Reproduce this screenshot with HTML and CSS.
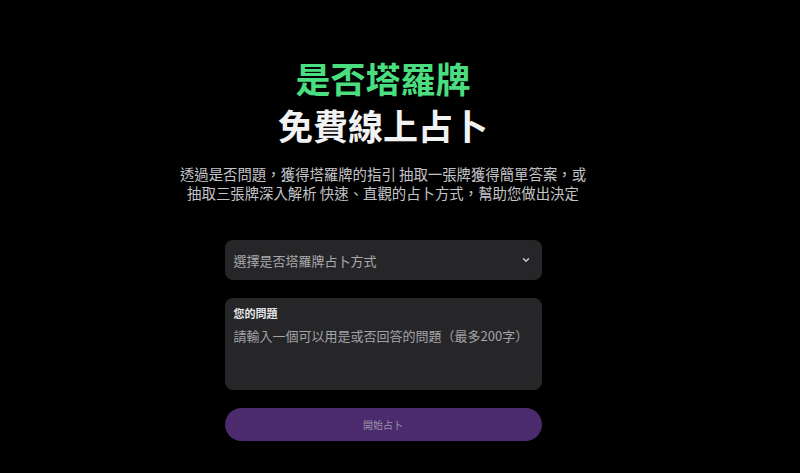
FILE: index.html
```html
<!DOCTYPE html>
<html lang="zh-Hant">
<head>
    <meta charset="UTF-8">
    <meta name="viewport" content="width=device-width, initial-scale=1.0">
    <title>是否塔羅牌 免費線上占卜</title>
    <link rel="stylesheet" href="styles.css">
</head>
<body>
    <main class="container">
        <h1 class="title">
            <span class="title-accent">是否塔羅牌</span>
            <span class="title-main">免費線上占卜</span>
        </h1>
        <p class="intro">透過是否問題，獲得塔羅牌的指引 抽取一張牌獲得簡單答案，或抽取三張牌深入解析 快速、直觀的占卜方式，幫助您做出決定</p>

        <form class="reading-form">
            <div class="select-box">
                <span class="select-text">選擇是否塔羅牌占卜方式</span>
                <svg class="chevron" width="10" height="10" viewBox="0 0 10 10">
                    <path d="M2.5 3.8 L5 6.2 L7.5 3.8" fill="none" stroke="#cfcfd2" stroke-width="1.4" stroke-linecap="round" stroke-linejoin="round"/>
                </svg>
            </div>
            <div class="question-box">
                <label class="question-label" for="question">您的問題</label>
                <textarea id="question" class="question-input" placeholder="請輸入一個可以用是或否回答的問題（最多200字）"></textarea>
            </div>
            <button type="button" class="submit-btn" disabled>開始占卜</button>
        </form>
    </main>
</body>
</html>
```
FILE: styles.css
```css
body {
    margin: 0;
    background-color: #000;
    font-family: "Noto Sans CJK TC", "Noto Sans", sans-serif;
    color: #fff;
}
.container {
    display: flex;
    flex-direction: column;
    align-items: center;
    padding: 54px 34px 0 0;
}
.title {
    margin: 0;
    display: flex;
    flex-direction: column;
    align-items: center;
    font-size: 35px;
    font-weight: 700;
    line-height: 47px;
}
.title-accent {
    color: #4ade80;
}
.title-main {
    color: #f2f2f2;
}
.intro {
    margin: 16px 0 0;
    max-width: 416px;
    text-align: center;
    font-size: 14.4px;
    line-height: 19px;
    color: #c4c4c8;
}
.reading-form {
    width: 317px;
    margin-top: 38px;
    display: flex;
    flex-direction: column;
    gap: 18px;
}
.select-box {
    height: 40px;
    box-sizing: border-box;
    padding: 0 9px;
    display: flex;
    align-items: center;
    justify-content: space-between;
    background-color: #262628;
    border-radius: 8px;
}
.select-text {
    font-size: 13px;
    color: #a9a9ae;
}
.chevron {
    margin-right: 2px;
}
.question-box {
    height: 92px;
    box-sizing: border-box;
    padding: 8px 9px;
    display: flex;
    flex-direction: column;
    background-color: #262628;
    border-radius: 8px;
}
.question-label {
    font-size: 11px;
    font-weight: 700;
    line-height: 14px;
    color: #e6e6e8;
}
.question-input {
    flex: 1;
    margin-top: 7px;
    padding: 0;
    border: none;
    outline: none;
    resize: none;
    background: transparent;
    font-family: inherit;
    font-size: 13px;
    line-height: 18px;
    color: #ddd;
}
.question-input::placeholder {
    color: #a3a3a8;
}
.submit-btn {
    height: 33px;
    border: none;
    border-radius: 999px;
    background-color: #4b2a6d;
    color: #9b94a4;
    font-family: inherit;
    font-size: 10px;
}
```
